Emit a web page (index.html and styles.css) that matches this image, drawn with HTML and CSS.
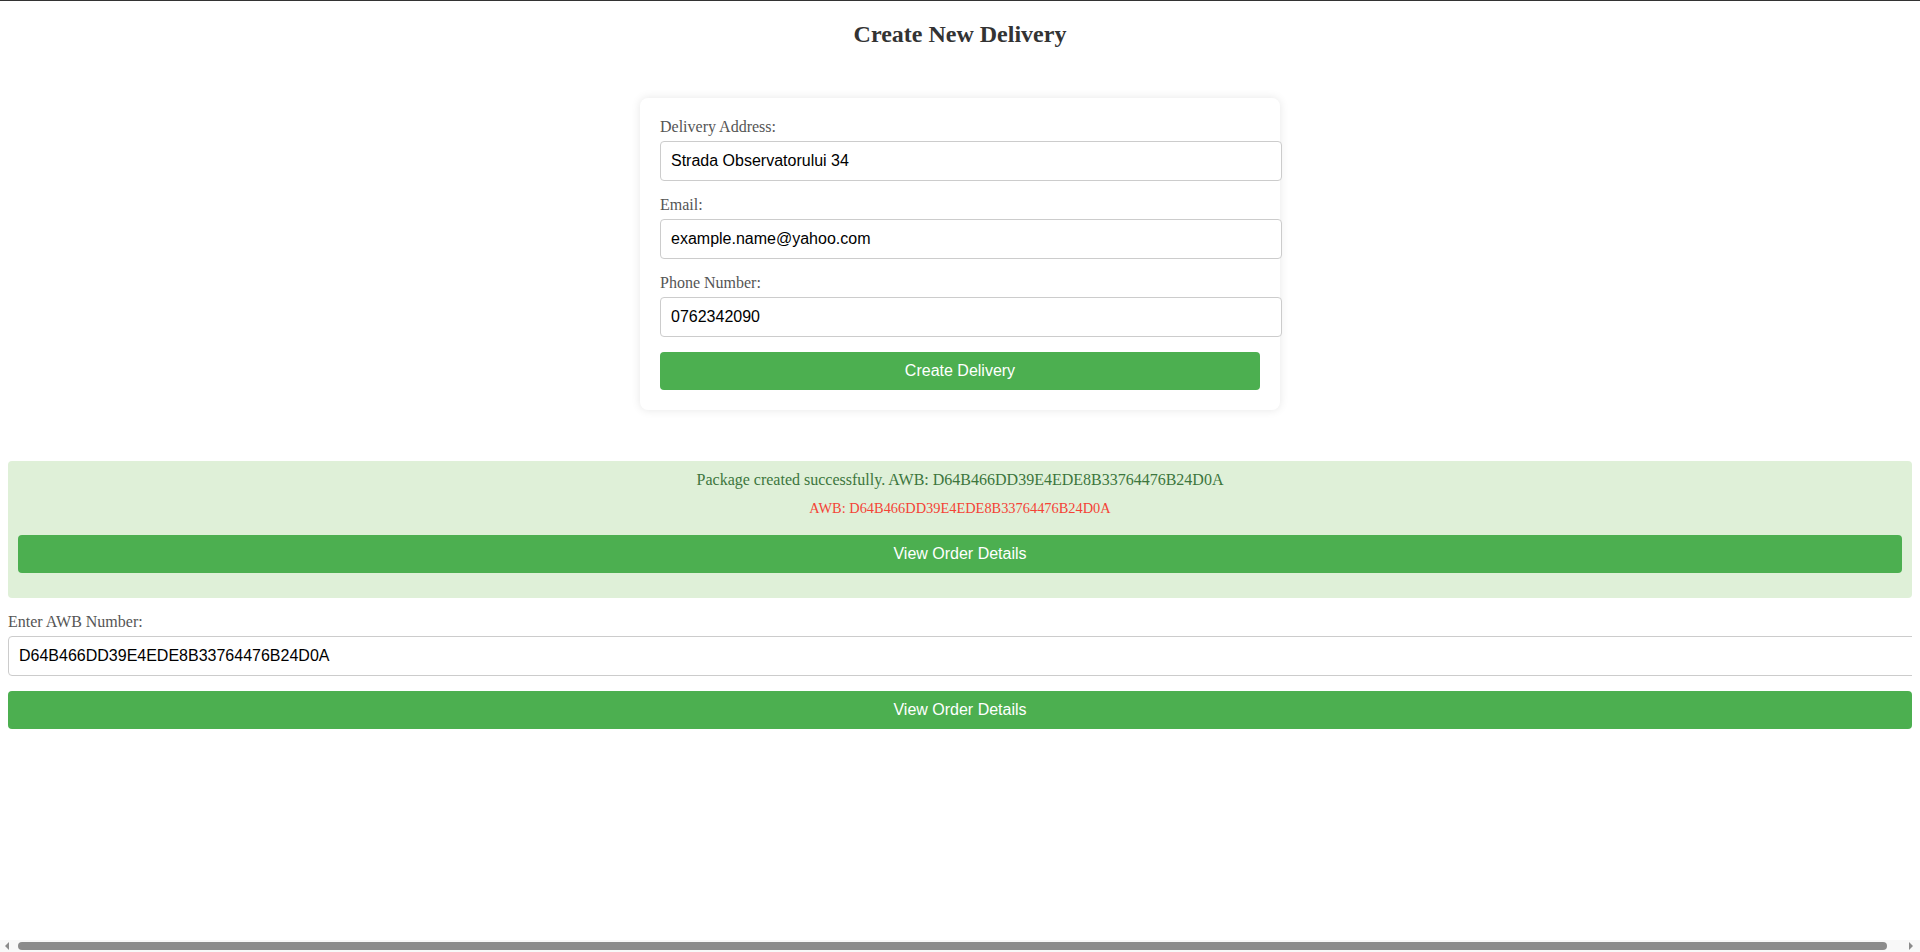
FILE: index.html
```html
<!DOCTYPE html>
<html lang="en">
<head>
<meta charset="utf-8">
<title>Create New Delivery</title>
<link rel="stylesheet" href="styles.css">
</head>
<body>
<h2 class="title">Create New Delivery</h2>

<form class="card">
  <div class="form-group">
    <label class="label">Delivery Address:</label>
    <input class="input" type="text" value="Strada Observatorului 34">
  </div>
  <div class="form-group">
    <label class="label">Email:</label>
    <input class="input" type="email" value="example.name@yahoo.com">
  </div>
  <div class="form-group">
    <label class="label">Phone Number:</label>
    <input class="input" type="text" value="0762342090">
  </div>
  <button class="btn" type="button">Create Delivery</button>
</form>

<div class="success">
  <p class="success-msg">Package created successfully. AWB: D64B466DD39E4EDE8B33764476B24D0A</p>
  <p class="awb">AWB: D64B466DD39E4EDE8B33764476B24D0A</p>
  <button class="btn" type="button">View Order Details</button>
</div>

<div class="lookup">
  <label class="label">Enter AWB Number:</label>
  <input class="input" type="text" value="D64B466DD39E4EDE8B33764476B24D0A">
  <button class="btn btn-lookup" type="button">View Order Details</button>
</div>

<div class="hscroll" aria-hidden="true">
  <span class="hscroll-arrow hscroll-left"></span>
  <span class="hscroll-thumb"></span>
  <span class="hscroll-arrow hscroll-right"></span>
</div>
</body>
</html>
```

FILE: styles.css
```css
html {
  background: #fff;
  box-shadow: inset 0 1px 0 #333;
}

body {
  margin: 0 8px 8px;
  padding-top: 1px;
  font-family: "Liberation Serif", "Times New Roman", serif;
  font-size: 16px;
  color: #333;
}

.title {
  margin: 19px 0 20px;
  text-align: center;
  font-size: 24px;
  line-height: 28px;
  font-weight: bold;
  color: #333;
}

.card {
  max-width: 600px;
  margin: 50px auto 51px;
  padding: 20px;
  background: #fff;
  border-radius: 8px;
  box-shadow: 0 0 10px rgba(0, 0, 0, 0.1);
}

.form-group {
  margin-bottom: 15px;
}

.label {
  display: block;
  margin-bottom: 5px;
  color: #555;
  font-size: 16px;
  line-height: 18px;
}

.input {
  display: block;
  width: 100%;
  padding: 10px;
  border: 1px solid #ccc;
  border-radius: 4px;
  font-family: "Liberation Sans", Arial, sans-serif;
  font-size: 16px;
  line-height: 18px;
  height: 18px;
  color: #000;
  background: #fff;
  margin: 0;
}

.btn {
  display: block;
  width: 100%;
  padding: 10px;
  border: none;
  border-radius: 4px;
  background: #4CAF50;
  color: #fff;
  font-family: "Liberation Sans", Arial, sans-serif;
  font-size: 16px;
  line-height: 18px;
  cursor: pointer;
  margin: 0;
}

.success {
  background: #dff0d8;
  border-radius: 4px;
  padding: 10px 10px 25px;
  text-align: center;
}

.success-msg {
  margin: 0 0 11px;
  color: #3c763d;
  font-size: 16px;
  line-height: 18px;
}

.awb {
  margin: 0 0 18px;
  color: #f44336;
  font-size: 14.4px;
  line-height: 17px;
}

.lookup {
  margin-top: 15px;
}

.btn-lookup {
  margin-top: 15px;
}

/* decorative horizontal scrollbar overlaying the bottom edge */
.hscroll {
  position: fixed;
  left: 0;
  right: 0;
  bottom: 0;
  height: 12px;
  background: #f8f8f8;
}

.hscroll-thumb {
  position: absolute;
  left: 18px;
  right: 33px;
  top: 2px;
  height: 8px;
  border-radius: 4px;
  background: #8b8b8b;
}

.hscroll-arrow {
  position: absolute;
  top: 2px;
  width: 0;
  height: 0;
  border-top: 4px solid transparent;
  border-bottom: 4px solid transparent;
}

.hscroll-left {
  left: 5px;
  border-right: 4px solid #8b8b8b;
}

.hscroll-right {
  right: 7px;
  border-left: 4px solid #8b8b8b;
}
```
